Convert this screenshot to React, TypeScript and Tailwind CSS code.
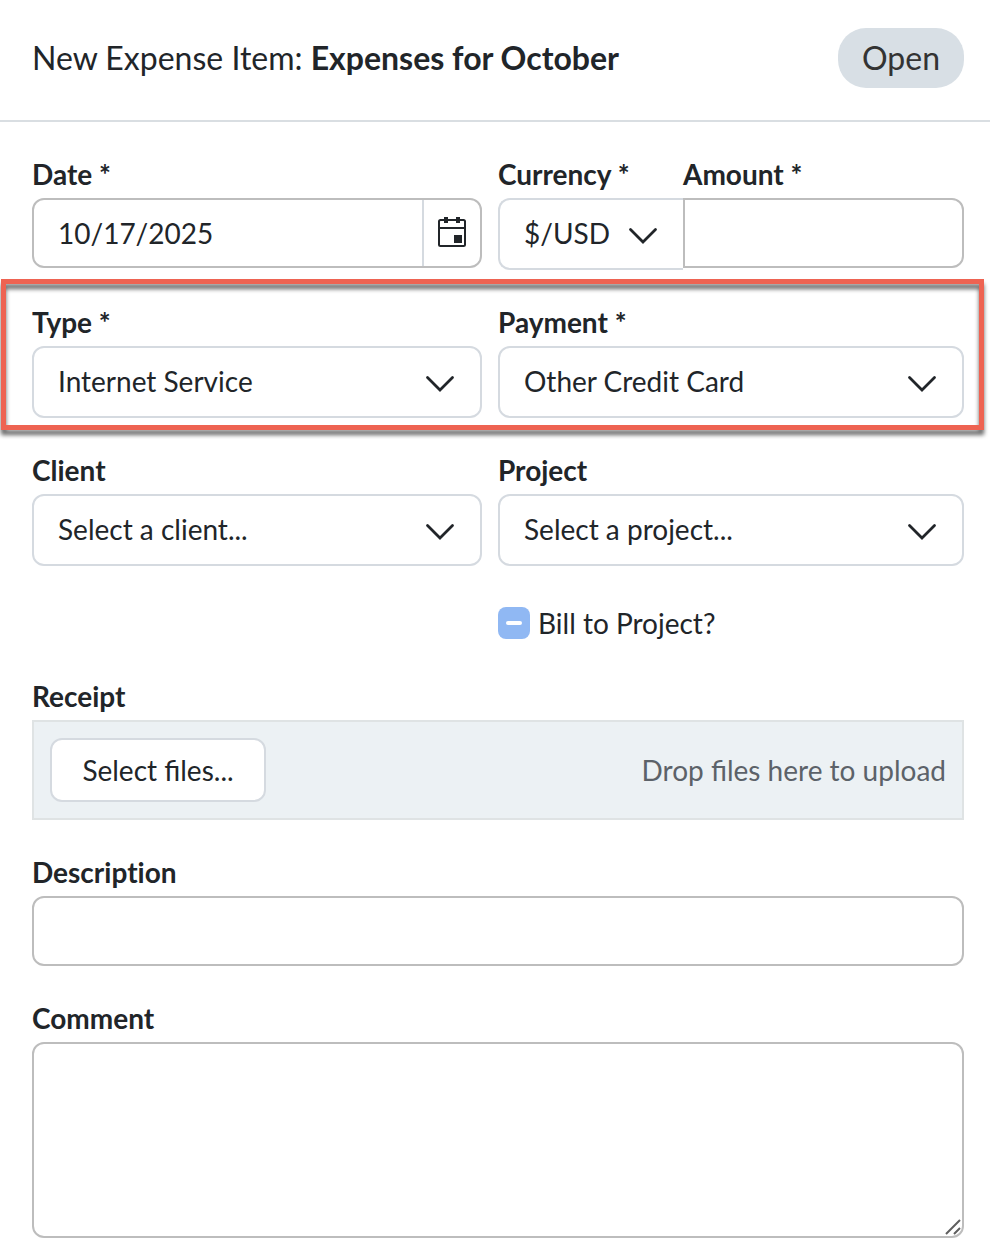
import { useEffect, useRef, type ReactNode } from "react";

const controlText = "text-[28px] leading-9 text-[#212529]";
const inputBorder = "border-2 border-[#bdbdbd] rounded-xl";

function Chevron({ className }: { className: string }) {
  return (
    <svg
      className={`pointer-events-none absolute top-1/2 -translate-y-1/2 w-8 h-8 ${className}`}
      viewBox="0 0 32 32"
      fill="none"
      stroke="#212529"
      strokeWidth="2.8"
      strokeLinecap="round"
      strokeLinejoin="miter"
      aria-hidden="true"
    >
      <path d="M3.5 11.5 16 24 28.5 11.5" />
    </svg>
  );
}

function CalendarIcon() {
  return (
    <svg className="w-7 h-8" viewBox="0 0 28 32" aria-hidden="true">
      <rect x="1" y="3" width="26" height="26" rx="1.5" fill="none" stroke="#212529" strokeWidth="2" />
      <path d="M1 11h26" stroke="#212529" strokeWidth="2" />
      <path d="M6 0h4v6H6zM18 0h4v6h-4zM16 18h8v8h-8z" fill="#212529" />
    </svg>
  );
}

function Field({ id, label, className = "", children }: { id: string; label: string; className?: string; children: ReactNode }) {
  return (
    <div className={`flex flex-col min-w-0 ${className}`}>
      <label
        htmlFor={id}
        className="mb-1.5 text-[28px] leading-9 font-bold text-[#212529] whitespace-nowrap [font-variant-ligatures:none]"
      >
        {label}
      </label>
      {children}
    </div>
  );
}

function Select({ id, value, joined = false }: { id: string; value: string; joined?: boolean }) {
  return (
    <div className="relative">
      <select
        id={id}
        className={`appearance-none block w-full h-[72px] pl-6 pr-12 pb-0.5 bg-white border-2 border-[#d5dae0] ${controlText} ${
          joined ? "rounded-l-xl border-r-0" : "rounded-xl"
        }`}
      >
        <option>{value}</option>
      </select>
      <Chevron className={joined ? "right-6" : "right-[26px]"} />
    </div>
  );
}

function BillToProject() {
  const ref = useRef<HTMLInputElement>(null);

  useEffect(() => {
    if (ref.current) ref.current.indeterminate = true;
  }, []);

  return (
    <label className={`col-start-2 flex items-center gap-2 h-[42px] mt-0.5 ${controlText}`}>
      <span className="relative flex">
        <input ref={ref} type="checkbox" className="appearance-none w-8 h-8 rounded-lg bg-[#90b8f3]" />
        <span className="pointer-events-none absolute inset-0 m-auto w-4 h-1 rounded-sm bg-white" />
      </span>
      Bill to Project?
    </label>
  );
}

export default function App() {
  return (
    <main className="bg-white font-['Lato',sans-serif] text-[#212529] overflow-x-hidden">
      <header className="flex items-center justify-between pt-7 pb-8 pl-8 pr-[26px] border-b-2 border-[#d9dee2]">
        <h1 className="text-[32px] leading-10">
          New Expense Item: <strong className="font-bold">Expenses for October</strong>
        </h1>
        <span className="flex items-center h-[60px] px-6 rounded-[28px] bg-[#d8dfe5] text-[32px] text-[#333333]">Open</span>
      </header>

      <form className="flex flex-col gap-[34px] pt-[34px] pb-[18px] pl-8 pr-[26px]">
        <div className="grid grid-cols-[450fr_466fr] gap-4">
          <Field id="date" label="Date *">
            <div className={`flex h-[70px] overflow-hidden ${inputBorder}`}>
              <input id="date" type="text" defaultValue="10/17/2025" className={`flex-1 min-w-0 px-6 ${controlText}`} />
              <button
                type="button"
                aria-label="Open calendar"
                className="flex items-center justify-center w-[58px] border-l-2 border-[#d5dae0]"
              >
                <CalendarIcon />
              </button>
            </div>
          </Field>
          <div className="flex">
            <Field id="currency" label="Currency *" className="w-[185px]">
              <Select id="currency" value="$/USD" joined />
            </Field>
            <Field id="amount" label="Amount *" className="flex-1">
              <input
                id="amount"
                type="text"
                className={`w-full h-[70px] px-6 border-2 border-[#bdbdbd] rounded-r-xl ${controlText}`}
              />
            </Field>
          </div>
        </div>

        <div className="relative grid grid-cols-[450fr_466fr] gap-4">
          <Field id="type" label="Type *">
            <Select id="type" value="Internet Service" />
          </Field>
          <Field id="payment" label="Payment *">
            <Select id="payment" value="Other Credit Card" />
          </Field>
          <div className="pointer-events-none absolute -top-[25px] -bottom-3 -left-[31px] -right-5 border-5 border-[#ee6352] drop-shadow-[0_5px_2px_rgba(0,0,0,0.6)]" />
        </div>

        <div className="grid grid-cols-[450fr_466fr] gap-4">
          <Field id="client" label="Client">
            <Select id="client" value="Select a client..." />
          </Field>
          <Field id="project" label="Project">
            <Select id="project" value="Select a project..." />
          </Field>
        </div>

        <div className="grid grid-cols-[450fr_466fr] gap-4">
          <BillToProject />
        </div>

        <Field id="receipt" label="Receipt">
          <div className="flex items-center justify-between p-4 bg-[#ecf1f4] border-2 border-[#dfe3e4]">
            <button
              id="receipt"
              type="button"
              className={`w-[216px] h-16 bg-white border-2 border-[#d5dae0] rounded-xl ${controlText}`}
            >
              Select files...
            </button>
            <span className="text-[28px] leading-9 text-[#5c6269]">Drop files here to upload</span>
          </div>
        </Field>

        <Field id="description" label="Description">
          <input id="description" type="text" className={`w-full h-[70px] px-6 ${inputBorder} ${controlText}`} />
        </Field>

        <Field id="comment" label="Comment">
          <div className="relative">
            <textarea
              id="comment"
              className={`block w-full h-[196px] px-6 py-4 resize-none ${inputBorder} ${controlText}`}
            />
            <svg
              className="pointer-events-none absolute right-0.5 bottom-0.5 w-[18px] h-[18px]"
              viewBox="0 0 18 18"
              stroke="#5f5f5f"
              strokeWidth="2"
              aria-hidden="true"
            >
              <path d="M2 16 16 2M10 16 16 10" />
            </svg>
          </div>
        </Field>
      </form>
    </main>
  );
}
